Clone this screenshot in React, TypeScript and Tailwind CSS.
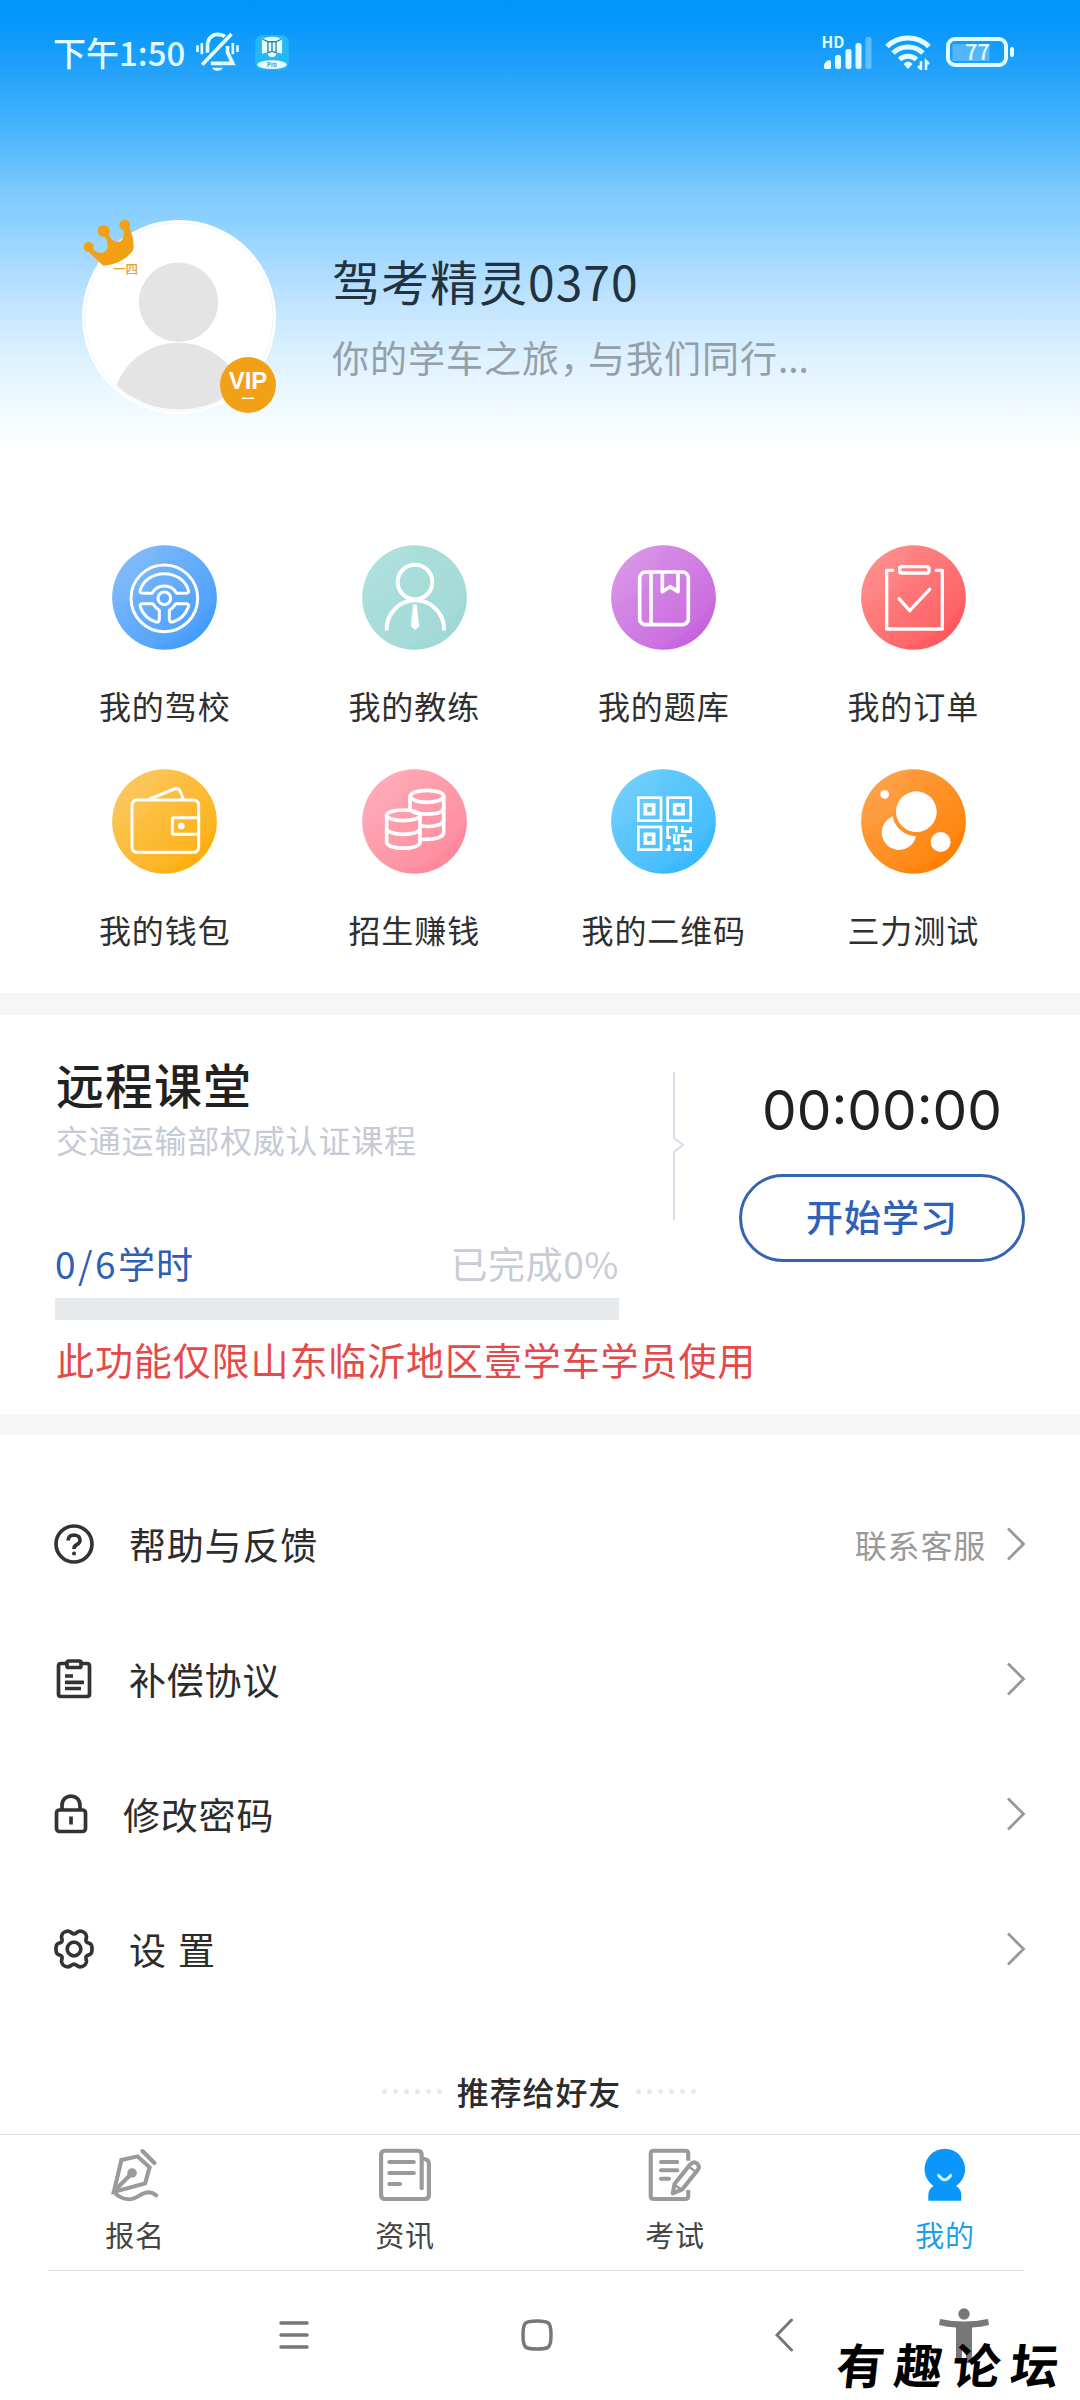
import type { ReactNode } from "react";
import { clsx } from "clsx";

type Shortcut = {
  id: string;
  label: string;
  from: string;
  to: string;
  glyph: ReactNode;
};

const shortcuts: Shortcut[] = [
  {
    id: "school",
    label: "我的驾校",
    from: "#78b5fb",
    to: "#429cfe",
    glyph: (
      <g strokeWidth="9">
        <circle cx="157" cy="160" r="100" />
        <circle cx="157" cy="160" r="19" />
        <path d="M92 145H120C128 130 140 123 157 123C174 123 186 130 194 145H222Q232 145 229 135C220 105 190 86 157 86C124 86 94 105 85 135Q82 145 92 145Z" />
        <path d="M92 176H122Q132 190 142 196V222Q142 233 132 231C108 224 92 206 85 186Q82 176 92 176Z" />
        <path d="M222 176H192Q182 190 172 196V222Q172 233 182 231C206 224 222 206 229 186Q232 176 222 176Z" />
      </g>
    ),
  },
  {
    id: "coach",
    label: "我的教练",
    from: "#a9dedb",
    to: "#9fd8d5",
    glyph: (
      <g strokeWidth="12">
        <circle cx="159" cy="111" r="52" />
        <path d="M74 252A86 86 0 0 1 246 252" />
        <path
          d="M155 179H163L171 244L159 254L148 244Z"
          fill="#fff"
          strokeWidth="2"
        />
      </g>
    ),
  },
  {
    id: "questions",
    label: "我的题库",
    from: "#d68ee8",
    to: "#c763dc",
    glyph: (
      <g strokeWidth="11">
        <rect x="86" y="81" width="146" height="158" rx="18" />
        <path d="M120 82V238M154 84V140L177 125L201 140V84" />
      </g>
    ),
  },
  {
    id: "orders",
    label: "我的订单",
    from: "#fe8685",
    to: "#fe575c",
    glyph: (
      <g strokeWidth="10">
        <rect x="116" y="65" width="88" height="19" rx="6" />
        <path d="M95 76H77V252H244V76H226" />
        <path d="M114 161L146 197L206 133" />
      </g>
    ),
  },
  {
    id: "wallet",
    label: "我的钱包",
    from: "#fbc452",
    to: "#feae0c",
    glyph: (
      <g strokeWidth="9">
        <rect x="60" y="93" width="200" height="157" rx="15" />
        <path d="M113 90L187 60Q199 56 204 66L214 90" />
        <path d="M260 146H186Q181 146 181 151V191Q181 196 186 196H260" />
        <circle cx="208" cy="171" r="10" fill="#fff" stroke="none" />
      </g>
    ),
  },
  {
    id: "recruit",
    label: "招生赚钱",
    from: "#fea6b4",
    to: "#fe8799",
    glyph: (
      <g strokeWidth="11">
        <ellipse cx="195" cy="82" rx="50" ry="18" />
        <path d="M144 82V118M245 82V190C245 206 218 212 184 211" />
        <path d="M152 128C170 138 245 140 245 116M180 171C205 175 245 170 245 152" />
        <ellipse cx="124" cy="139" rx="50" ry="16" />
        <path d="M74 139V220C74 243 174 243 174 220V139M74 178C74 202 174 202 174 178" />
      </g>
    ),
  },
  {
    id: "qrcode",
    label: "我的二维码",
    from: "#66cbfa",
    to: "#37b8fe",
    glyph: (
      <g strokeWidth="8" strokeLinecap="butt" strokeLinejoin="miter">
        <rect x="82" y="86" width="68" height="69" />
        <rect x="170" y="86" width="69" height="69" />
        <rect x="82" y="174" width="68" height="68" />
        <rect x="103" y="108" width="25" height="26" strokeWidth="11" />
        <rect x="191" y="108" width="25" height="26" strokeWidth="11" />
        <rect x="103" y="196" width="25" height="26" strokeWidth="11" />
        <path d="M166 174H196V190M170 170V206H180M214 170V188H239V174M166 242H174V228M190 242H212M190 195V222H202V200H226M218 216H239V242H222V228" />
      </g>
    ),
  },
  {
    id: "ability",
    label: "三力测试",
    from: "#fd9a3b",
    to: "#ff7f00",
    glyph: (
      <g fill="#fff" stroke="none">
        <path d="M96 142A52 52 0 1 0 165 202A74 74 0 0 1 96 148Z" />
        <circle cx="166" cy="128" r="61" />
        <circle cx="239" cy="219" r="30" />
        <circle cx="71" cy="76" r="13" />
      </g>
    ),
  },
];

function ShortcutIcon({ item }: { item: Shortcut }) {
  const fillId = `fill-${item.id}`;
  const clipId = `clip-${item.id}`;

  return (
    <svg viewBox="0 0 315 315" className="size-[105px]" aria-hidden="true">
      <defs>
        <linearGradient id={fillId} x1="0.05" y1="0.05" x2="0.95" y2="0.95">
          <stop offset="0.1" stopColor={item.from} />
          <stop offset="0.9" stopColor={item.to} />
        </linearGradient>
        <clipPath id={clipId}>
          <circle cx="157.5" cy="157.5" r="157" />
        </clipPath>
      </defs>
      <g clipPath={`url(#${clipId})`}>
        <rect width="315" height="315" fill={`url(#${fillId})`} />
        <circle cx="80" cy="60" r="250" fill="#fff" opacity="0.04" />
        <circle cx="10" cy="40" r="130" fill="#fff" opacity="0.03" />
      </g>
      <g fill="none" stroke="#fff" strokeLinecap="round" strokeLinejoin="round">
        {item.glyph}
      </g>
    </svg>
  );
}

function StatusBar() {
  return (
    <div className="flex h-[104px] items-center pl-[53px] pr-[66px] text-[#e2fbff]">
      <span className="text-[33px] font-medium leading-[48px]">下午1:50</span>

      <svg
        viewBox="0 0 132 120"
        className="ml-2.5 h-[40px] w-[45px]"
        fill="none"
        stroke="currentColor"
        strokeWidth="11"
        aria-hidden="true"
      >
        <path d="M20 98L108 6" />
        <path d="M36 62V42C36 18 52 7 66 7Q80 7 88 14M96 42V62L112 94H46" />
        <path d="M50 107H82Q78 116 66 116Q54 116 50 107Z" fill="currentColor" stroke="none" />
        <path d="M6 40V60M19 33V67M112 33V67M126 40V60" strokeWidth="8" />
      </svg>

      <svg viewBox="0 0 100 104" className="ml-[15px] h-[35px] w-[34px]" aria-hidden="true">
        <rect width="100" height="104" rx="22" fill="#22b8f5" />
        <path
          d="M20 12Q50 -2 80 12V56L64 52Q62 66 50 66Q38 66 36 52L20 56Z"
          fill="#e6fcff"
        />
        <path
          d="M22 12L38 20V54M38 20H62V54M62 20L78 12M50 20V50M36 54L50 48L64 54"
          fill="none"
          stroke="#2a86a8"
          strokeWidth="4"
        />
        <ellipse cx="50" cy="88" rx="44" ry="13" fill="#e6fcff" />
        <text
          x="50"
          y="94"
          textAnchor="middle"
          fontSize="17"
          fontWeight="700"
          fill="#5a8fa0"
        >
          Pro
        </text>
      </svg>

      <div className="ml-auto flex items-center">
        <svg viewBox="0 0 52 36" className="h-[36px] w-[52px] overflow-visible" aria-hidden="true">
          <g fill="currentColor">
            <text x="-0.500" y="14" fontSize="15.500" fontWeight="700">
              HD
            </text>
            <path d="M2 34V31Q3 27 7.500 26Q9 26 9 29V34Q9 35 7 35H4Q2 35 2 34Z" />
            <rect x="13" y="21" width="6" height="14" rx="2.500" />
            <rect x="23.500" y="15" width="6" height="20" rx="2.500" />
            <rect x="33.500" y="9" width="6" height="26" rx="2.500" />
            <rect x="43.500" y="3" width="6" height="32" rx="2" opacity="0.35" />
          </g>
        </svg>

        <svg
          viewBox="0 0 46 36"
          className="ml-[11px] h-[36px] w-[46px]"
          fill="none"
          stroke="currentColor"
          strokeWidth="5"
          aria-hidden="true"
        >
          <path d="M2 12.5A30 30 0 0 1 44 12.5" />
          <path d="M8 19A21.5 21.5 0 0 1 38 19" />
          <path d="M14.500 25.500A12.500 12.500 0 0 1 31.500 25.500" />
          <path d="M18.500 30Q23 25 27.500 30L23 35Z" fill="currentColor" stroke="none" />
          <path d="M36 27V35L33 32M41 36V27L44 30" strokeWidth="2.500" />
        </svg>

        <svg viewBox="0 0 68 30" className="ml-[15px] h-[30px] w-[68px] overflow-visible" aria-hidden="true">
          <rect
            x="2"
            y="2"
            width="58"
            height="26"
            rx="7"
            fill="none"
            stroke="currentColor"
            strokeWidth="4"
          />
          <rect x="6.500" y="7" width="37" height="17" fill="#fff" opacity="0.25" />
          <rect x="64" y="10" width="4" height="10" rx="2" fill="currentColor" />
          <text x="31.500" y="23" textAnchor="middle" fontSize="22" fontWeight="500" fill="currentColor">
            77
          </text>
        </svg>
      </div>
    </div>
  );
}

function Avatar() {
  return (
    <div className="relative size-[194px] shrink-0">
      <svg viewBox="0 0 194 194" className="size-full" aria-hidden="true">
        <defs>
          <clipPath id="avatar-clip">
            <circle cx="97" cy="96" r="93.500" />
          </clipPath>
        </defs>
        <circle cx="97" cy="97" r="97" fill="#fff" />
        <circle cx="97" cy="97" r="94" fill="none" stroke="#e9f1f6" strokeWidth="0.700" />
        <g clipPath="url(#avatar-clip)" fill="#e4e4e4">
          <circle cx="96.500" cy="82.300" r="39.700" />
          <circle cx="96.500" cy="189.500" r="66.800" />
        </g>
      </svg>

      {/* gold crown pinned to the upper left edge */}
      <svg
        viewBox="65 85 180 150"
        className="absolute left-0 top-[-2px] h-[50px] w-[60px]"
        fill="#f2a117"
        aria-hidden="true"
      >
        <circle cx="85" cy="172" r="15" />
        <circle cx="130" cy="124" r="18" />
        <circle cx="193" cy="106" r="16" />
        <path d="M80 182L126 226Q131 229 138 227C174 222 200 206 217 184Q220 180 220 172C220 150 215 132 207 112L188 116C193 134 190 148 180 155C166 162 150 150 145 134L130 136C144 152 146 176 136 184C124 194 108 190 94 176Z" />
      </svg>
      <span className="absolute left-[31px] top-[39px] whitespace-nowrap text-[12.500px] font-medium leading-5 text-[#e8a030]">
        一四
      </span>

      <span className="absolute left-[138px] top-[137px] flex size-[56px] flex-col items-center rounded-full bg-[#f2a117] text-white">
        <span className="mt-[14px] font-['Liberation_Sans'] text-[24px] font-bold leading-[20px]">
          VIP
        </span>
        <span className="text-[13px] font-medium leading-[14px]">一</span>
      </span>
    </div>
  );
}

function Profile() {
  return (
    <div className="mt-[116px] flex pl-[82px]">
      <Avatar />
      <div className="ml-[56px] pt-[30px]">
        <h1 className="text-[48px] leading-[60px] tracking-[1px] text-[#24323d]">
          驾考精灵0370
        </h1>
        <p className="mt-[19px] text-[37px] leading-[56px] tracking-[1px] text-[#94a0a8]">
          你的学车之旅<span className="tracking-[-9px]">，</span>与我们同行
          <span className="tracking-normal">...</span>
        </p>
      </div>
    </div>
  );
}

function RemoteClass() {
  return (
    <section className="h-[399px] pl-[55px] pt-10">
      <div className="flex">
        <div className="w-[564px]">
          <h2 className="pl-px text-[48px] font-medium leading-[56px] tracking-[1px] text-[#212121]">
            远程课堂
          </h2>
          <p className="mt-2 pl-px text-[32px] leading-10 tracking-[0.800px] text-[#c6c9d6]">
            交通运输部权威认证课程
          </p>
          <div className="mt-[80px] flex justify-between text-[37px] leading-[48px]">
            <span className="tracking-[1px] text-[#2c5fb5]">
              <span className="tracking-[2.500px]">0/6</span>学时
            </span>
            <span className="tracking-[0.600px] text-[#c9cbd6]">已完成0%</span>
          </div>
          <div className="mt-[11px] h-[22px] bg-[#e6eaec]" />
        </div>

        <svg
          viewBox="0 0 14 148"
          className="ml-[53px] mt-[17px] h-[148px] w-[14px]"
          fill="none"
          stroke="#d9dce8"
          strokeWidth="2"
          aria-hidden="true"
        >
          <path d="M2 0V66L11 73L2 80V148" />
        </svg>

        <div className="ml-[53px] flex w-[286px] flex-col items-center pt-[27px]">
          <span className="font-['Inter'] text-[55px] leading-[56px] text-[#212121]">
            00:00:00
          </span>
          <button
            type="button"
            className="mt-[36px] flex h-[88px] w-full items-center justify-center rounded-full border-[3px] border-[#3665b0] pb-0.5 text-[37px] font-medium tracking-[1px] text-[#2f61b8]"
          >
            开始学习
          </button>
        </div>
      </div>
      <p className="mt-[15px] whitespace-nowrap pl-px text-[38px] leading-[48px] tracking-[0.900px] text-[#e44a4a]">
        此功能仅限山东临沂地区壹学车学员使用
      </p>
    </section>
  );
}

const menuItems = [
  {
    label: "帮助与反馈",
    hint: "联系客服",
    iconClass: "w-[40px] mr-[34px]",
    viewBox: "0 0 40 40",
    icon: (
      <>
        <circle cx="20" cy="20" r="18" />
        <path d="M14 16.500Q14.500 11 20 11Q26 11.500 26 16Q26 19 23 20.500Q20 22 20 25" />
        <circle cx="20" cy="29.500" r="2" fill="#333" stroke="none" />
      </>
    ),
  },
  {
    label: "补偿协议",
    iconClass: "w-[40px] mr-[34px]",
    viewBox: "0 0 40 40",
    icon: (
      <>
        <path d="M13 4.500H7Q4.500 4.500 4.500 7V35Q4.500 37.500 7 37.500H33Q35.500 37.500 35.500 35V7Q35.500 4.500 33 4.500H27" />
        <rect x="13" y="2" width="14" height="6.500" rx="1.500" />
        <path d="M11 17H19M11 23.300H30M11 29.500H27" />
      </>
    ),
  },
  {
    label: "修改密码",
    iconClass: "w-[34px] mr-[34px]",
    viewBox: "0 0 34 40",
    icon: (
      <>
        <rect x="2.500" y="16" width="29" height="21.500" rx="3" />
        <path d="M8 16V11.500C8 -1 26 -1 26 11.500V16M17 22.500V30.500" />
      </>
    ),
  },
  {
    label: "设 置",
    iconClass: "w-[40px] mr-[34px]",
    viewBox: "0 0 40 40",
    icon: (
      <>
        <path d="M20 4.800C22 4.800 23.500 2.200 26 2.200C29 2.200 31.800 4 32.400 7C32.800 9.500 31 11 32.400 12.800C33.500 14.300 36.500 13.800 37.400 16C38.200 18.500 38.200 21.500 37.400 24C36.500 26.200 33.500 25.700 32.400 27.200C31 29 32.800 30.500 32.400 33C31.800 36 29 37.800 26 37.800C23.500 37.800 22 35.200 20 35.200C18 35.200 16.500 37.800 14 37.800C11 37.800 8.200 36 7.600 33C7.200 30.500 9 29 7.600 27.200C6.500 25.700 3.500 26.200 2.600 24C1.800 21.500 1.800 18.500 2.600 16C3.500 13.800 6.500 14.300 7.600 12.800C9 11 7.200 9.500 7.600 7C8.200 4 11 2.200 14 2.200C16.500 2.200 18 4.800 20 4.800Z" />
        <circle cx="20" cy="20" r="6.800" />
      </>
    ),
  },
];

function Menu() {
  return (
    <ul className="pt-[41px]">
      {menuItems.map((item) => (
        <li key={item.label} className="flex h-[135px] items-center pl-[54px] pr-[54px]">
          <svg
            viewBox={item.viewBox}
            className={clsx("h-[40px] shrink-0", item.iconClass)}
            fill="none"
            stroke="#333"
            strokeWidth="3.700"
            strokeLinejoin="round"
            aria-hidden="true"
          >
            {item.icon}
          </svg>
          <span className="pl-px text-[37px] leading-[50px] tracking-[0.800px] text-[#2c2c2c] [word-spacing:2px]">
            {item.label}
          </span>
          <span className="ml-auto text-[32px] leading-[50px] tracking-[0.800px] text-[#999]">
            {item.hint}
          </span>
          <svg
            viewBox="0 0 20 34"
            className="ml-[20px] h-[34px] w-[20px]"
            fill="none"
            stroke="#999"
            strokeWidth="2.800"
            aria-hidden="true"
          >
            <path d="M2 1.500L17.500 17L2 32.500" />
          </svg>
        </li>
      ))}
    </ul>
  );
}

function Dots() {
  return (
    <span className="flex gap-[6px]">
      {[0, 1, 2, 3, 4, 5].map((dot) => (
        <span key={dot} className="size-[5px] rounded-full bg-[#e9e9e9]" />
      ))}
    </span>
  );
}

const tabs = [
  {
    label: "报名",
    viewBox: "314 324 157 162",
    icon: (
      <>
        <path d="M353 360L400 349L435 382L422 430L331 456Z" strokeLinejoin="miter" />
        <path d="M384 399L335 450M414 333L449 369" />
        <path d="M331 456Q350 477 375 478C400 477 410 457 432 457Q445 458 454 466" />
        <circle cx="384" cy="399" r="14" fill="#9a9a9a" stroke="none" />
      </>
    ),
  },
  {
    label: "资讯",
    viewBox: "1098 324 157 162",
    icon: (
      <>
        <path d="M1225 445V344Q1225 332 1213 332H1119Q1107 332 1107 344V465Q1107 477 1119 477H1234Q1246 477 1246 465V370Q1246 358 1228 356" />
        <path d="M1131 366H1202M1131 399H1202M1131 432H1162" />
      </>
    ),
  },
  {
    label: "考试",
    viewBox: "314 324 157 162",
    icon: (
      <>
        <path
          d="M431 362V340Q431 332 423 332H331Q322 332 322 340V469Q322 477 331 477H423Q431 477 431 469V450"
          strokeLinecap="butt"
        />
        <path d="M352 366H399M352 391H399M352 416H375" />
        <path d="M437 373Q447 362 457 371Q466 379 459 389L414 448L386 460L391 432Z" />
        <path d="M432 379L452 395M394 436L408 447" strokeWidth="7" />
      </>
    ),
  },
  {
    label: "我的",
    viewBox: "1098 324 157 162",
    active: true,
    icon: (
      <>
        <path
          d="M1143 438A59 61 0 1 1 1209 438Q1224 448 1224 465V482H1128V465Q1128 448 1143 438Z"
          fill="#0a96fb"
          stroke="none"
        />
        <path d="M1158 406Q1176 432 1193 406" stroke="#d5f3ff" strokeWidth="9" />
      </>
    ),
  },
];

function TabBar() {
  return (
    <nav className="mt-[19px] grid h-[136px] grid-cols-4 border-t border-[#dedede] pt-[13px]">
      {tabs.map((tab) => (
        <div key={tab.label} className="flex flex-col items-center">
          <svg
            viewBox={tab.viewBox}
            preserveAspectRatio="none"
            className="size-[54px]"
            fill="none"
            stroke="#9a9a9a"
            strokeWidth="12"
            strokeLinecap="round"
            strokeLinejoin="round"
            aria-hidden="true"
          >
            {tab.icon}
          </svg>
          <span
            className={clsx(
              "mt-[12px] text-[29px] leading-10 tracking-[0.800px]",
              tab.active ? "text-[#1f9fe6]" : "text-[#444]",
            )}
          >
            {tab.label}
          </span>
        </div>
      ))}
    </nav>
  );
}

function SystemNav() {
  return (
    <div className="flex h-[128px] items-center pl-[279px]">
      <svg viewBox="0 0 30 32" className="h-8 w-[30px]" stroke="#777" strokeWidth="3.500" strokeLinecap="round" aria-hidden="true">
        <path d="M2 4H28M2 16H28M2 28H28" />
      </svg>
      <svg viewBox="0 0 32 32" className="ml-[212px] size-8" fill="none" stroke="#777" strokeWidth="3.500" aria-hidden="true">
        <path d="M16 2C28 2 30 3 30 16C30 29 28 30 16 30C4 30 2 29 2 16C2 3 4 2 16 2Z" />
      </svg>
      <svg viewBox="0 0 18 34" className="ml-[222px] h-[34px] w-[18px]" fill="none" stroke="#777" strokeWidth="3" strokeLinecap="round" aria-hidden="true">
        <path d="M16.500 2L2 17L16.500 32" />
      </svg>
      <svg viewBox="0 0 50 56" className="ml-[146px] h-[56px] w-[50px]" fill="#777" aria-hidden="true">
        <circle cx="25" cy="7" r="5.700" />
        <path d="M1 12Q25 17 49 12L50 18Q42 20 33 20.500V56H27V40H23V56H17V20.500Q8 20 0 18Z" />
      </svg>
    </div>
  );
}

export default function App() {
  return (
    <div className="relative h-[2400px] w-[1080px] overflow-hidden bg-white font-['Noto_Sans_CJK_SC',sans-serif]">
      <header className="h-[470px] bg-[linear-gradient(to_bottom,#0095fc_0px,#0a98fb_30px,#1ea0fa_64px,#42b1fd_120px,#7bcafc_190px,#98d5ff_240px,#bfe3ff_300px,#dff2ff_360px,#f6fcff_420px,#ffffff_450px)]">
        <StatusBar />
        <Profile />
      </header>

      <section className="grid grid-cols-4 gap-y-10 pb-10 pl-10 pr-[42px] pt-[75px]">
        {shortcuts.map((item) => (
          <div key={item.id} className="flex flex-col items-center">
            <ShortcutIcon item={item} />
            <span className="mt-[31px] text-[32px] leading-[48px] tracking-[0.900px] text-[#2f2f2f]">
              {item.label}
            </span>
          </div>
        ))}
      </section>

      <div className="h-[22px] bg-[#f6f6f6]" />
      <RemoteClass />
      <div className="h-[21px] bg-[#f6f6f6]" />

      <Menu />

      <div className="flex items-center justify-center gap-[15px] pr-[2px] pt-[51px]">
        <Dots />
        <span className="text-[32px] font-medium leading-[48px] tracking-[0.900px] text-[#2c2c2c]">
          推荐给好友
        </span>
        <Dots />
      </div>

      <TabBar />
      <div className="ml-12 h-px w-[976px] bg-[#dedede]" />
      <SystemNav />

      <span className="absolute left-[837px] top-[2331px] -skew-x-6 whitespace-nowrap text-[48px] font-bold leading-[64px] tracking-[10px] text-black">
        有趣论坛
      </span>
    </div>
  );
}
